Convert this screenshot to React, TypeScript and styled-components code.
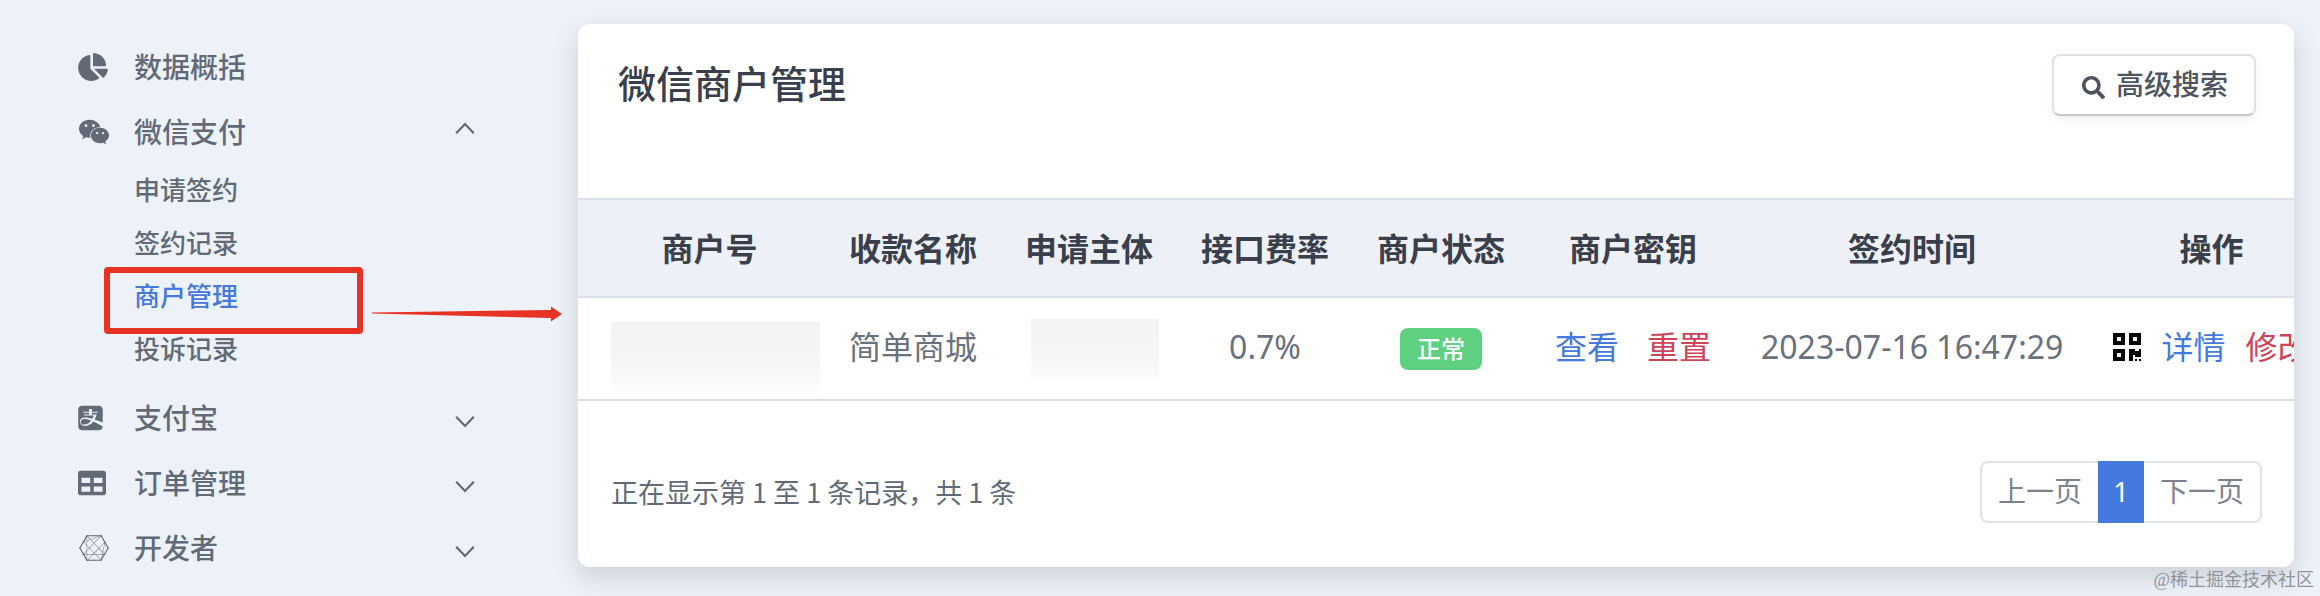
import React from 'react';
import styled, { createGlobalStyle, css } from 'styled-components';
import {
  FaAlipay,
  FaChartPie,
  FaConnectdevelop,
  FaQrcode,
  FaSearch,
  FaTable,
  FaWeixin,
} from 'react-icons/fa';

const color = {
  page: '#edf1f8',
  head: '#edf1f7',
  line: '#dadfea',
  ink: '#39404c',
  text: '#626a77',
  muted: '#7c838e',
  blue: '#4579dd',
  red: '#cf4359',
  green: '#5fcf80',
  mark: '#e63323',
};

const GlobalStyle = createGlobalStyle`
  *, *::before, *::after { box-sizing: border-box; }
  body {
    margin: 0;
    background: ${color.page};
    color: ${color.text};
    font-family: "Noto Sans", "Noto Sans CJK SC", sans-serif;
    font-size: 28px;
    line-height: 40px;
  }
  a { color: inherit; text-decoration: none; }
  button { font: inherit; cursor: pointer; }
`;

const Page = styled.div`
  position: relative;
  display: flex;
  min-height: 100vh;
  overflow: hidden;
`;

const Sidebar = styled.nav`
  flex: 0 0 578px;
  padding: 34px 103px 0 78px;
`;

const MenuList = styled.ul`
  list-style: none;
  margin: 0;
  padding: 0;
`;

const menuRow = css`
  display: flex;
  align-items: center;
  width: 100%;
  height: 65px;
  padding: 0;
  border: 0;
  background: none;
  color: ${color.text};
  text-align: left;
  font-weight: 500;
`;

const MenuLink = styled.a`
  ${menuRow}
`;

const MenuButton = styled.button`
  ${menuRow}
`;

const MenuIcon = styled.span<{ $width: number }>`
  display: flex;
  flex: 0 0 56px;

  svg {
    width: ${(p) => p.$width}px;
    height: 28px;
  }
`;

const MenuLabel = styled.span`
  flex: 1;
`;

const Chevron = styled.svg<{ $open?: boolean }>`
  width: 20px;
  height: 20px;
  fill: none;
  stroke: currentColor;
  stroke-width: 2.2;
  transform: ${(p) => (p.$open ? 'rotate(180deg)' : 'none')};
`;

const SubMenu = styled.ul`
  list-style: none;
  margin: 0 0 9px;
  padding: 0 0 0 56px;
`;

const SubItem = styled.li`
  position: relative;
`;

const SubLink = styled.a<{ $active?: boolean }>`
  display: flex;
  align-items: center;
  height: 53px;
  padding-bottom: 2px;
  font-size: 26px;
  font-weight: 500;
  color: ${(p) => (p.$active ? color.blue : color.text)};
`;

const Callout = styled.span`
  position: absolute;
  top: -3px;
  left: -30px;
  width: 259px;
  height: 67px;
  border: 6px solid ${color.mark};
  border-radius: 4px;
  pointer-events: none;
`;

const CalloutArrow = styled.svg`
  position: absolute;
  top: 36px;
  left: 238px;
  width: 190px;
  height: 16px;
  fill: ${color.mark};
  pointer-events: none;
`;

const Main = styled.main`
  flex: 1;
  min-width: 0;
  padding: 24px 26px 29px 0;
`;

const Card = styled.section`
  overflow: hidden;
  border-radius: 12px;
  background: #fff;
  box-shadow: 0 10px 24px rgba(40, 45, 60, 0.17);
`;

const CardHeader = styled.header`
  display: flex;
  align-items: flex-start;
  justify-content: space-between;
  height: 174px;
  padding: 30px 38px 0 40px;
`;

const Title = styled.h1`
  margin: 0;
  font-size: 38px;
  line-height: 58px;
  font-weight: 500;
  color: ${color.ink};
`;

const SearchButton = styled.button`
  display: flex;
  align-items: center;
  gap: 11px;
  height: 62px;
  padding: 0 26px 2px 28px;
  border: 2px solid #dfe1e4;
  border-bottom-color: #c6c8cc;
  border-radius: 8px;
  background: #fff;
  box-shadow: 0 4px 8px rgba(0, 0, 0, 0.06);
  color: #4d545f;
  font-weight: 500;

  svg {
    width: 23px;
    height: 23px;
    margin-top: 6px;
  }
`;

const TableWrap = styled.div`
  overflow: hidden;
`;

const Table = styled.table`
  width: 100%;
  min-width: 1758px;
  table-layout: fixed;
  border-collapse: separate;
  border-spacing: 0;
  font-size: 32px;
  text-align: center;
  white-space: nowrap;
`;

const Th = styled.th`
  height: 100px;
  padding: 2px 24px 0;
  border: solid ${color.line};
  border-width: 2px 0;
  background: ${color.head};
  color: ${color.ink};
  font-weight: 600;

  &:first-child {
    padding-left: 40px;
  }
`;

const Td = styled.td`
  height: 103px;
  padding: 0 24px 4px;
  border-bottom: 2px solid #dcdee2;
  color: #69717e;
`;

const MaskCell = styled(Td)<{ $pad: string }>`
  padding: ${(p) => p.$pad};
  vertical-align: top;
`;

const Mask = styled.div<{ $height: number }>`
  height: ${(p) => p.$height}px;
  background: linear-gradient(#f2f3f5, #f5f6f7 60%, #fdfdfd);
`;

const Actions = styled.div<{ $gap: number }>`
  display: flex;
  align-items: center;
  justify-content: center;
  gap: ${(p) => p.$gap}px;
`;

const ActionLink = styled.a<{ $danger?: boolean }>`
  && {
    color: ${(p) => (p.$danger ? color.red : color.blue)};
  }
`;

const QrButton = styled.button`
  display: flex;
  padding: 0;
  border: 0;
  background: none;
  color: #000;

  svg {
    width: 28px;
    height: 32px;
  }
`;

const Badge = styled.span`
  display: inline-block;
  padding: 0 17px;
  border-radius: 8px;
  background: ${color.green};
  color: #fff;
  font-size: 24px;
  line-height: 42px;
  font-weight: 500;
  vertical-align: -3px;
`;

const CardFooter = styled.footer`
  display: flex;
  align-items: center;
  justify-content: space-between;
  height: 166px;
  padding: 16px 32px 0 33px;
`;

const Summary = styled.p`
  margin: 0;
  font-family: "Noto Sans CJK SC", sans-serif;
  font-size: 27px;
`;

const Pager = styled.div`
  display: flex;
  height: 62px;
  border: 2px solid #dfe3e8;
  border-radius: 8px;
`;

const PageButton = styled.button<{ $current?: boolean }>`
  padding: 0 16px 2px;
  border: 0;
  background: none;
  color: ${color.muted};

  ${(p) =>
    p.$current &&
    css`
      margin: -2px 0;
      padding: 0 15px 2px;
      background: ${color.blue};
      color: #fff;
    `}
`;

const Watermark = styled.span`
  position: absolute;
  right: 6px;
  bottom: 4px;
  font-family: "Liberation Serif", "Noto Sans CJK SC", serif;
  font-size: 18px;
  line-height: 24px;
  color: #8f949e;
`;

const MenuChevron = ({ open }: { open?: boolean }) => (
  <Chevron $open={open} viewBox="0 0 20 20" aria-hidden="true">
    <path d="M1.2 8.8 10 18 18.8 8.8" />
  </Chevron>
);

const subItems = ['申请签约', '签约记录', '商户管理', '投诉记录'];

const groups = [
  { label: '支付宝', icon: <FaAlipay />, iconWidth: 25 },
  { label: '订单管理', icon: <FaTable />, iconWidth: 28 },
  { label: '开发者', icon: <FaConnectdevelop />, iconWidth: 32 },
];

const columns = [
  { label: '商户号', width: 247 },
  { label: '收款名称', width: 176 },
  { label: '申请主体', width: 176 },
  { label: '接口费率', width: 176 },
  { label: '商户状态', width: 176 },
  { label: '商户密钥', width: 208 },
  { label: '签约时间', width: 350 },
  { label: '操作', width: 249 },
];

const Menu = () => (
  <Sidebar>
    <MenuList>
      <li>
        <MenuLink href="#overview">
          <MenuIcon $width={30}><FaChartPie /></MenuIcon>
          <MenuLabel>数据概括</MenuLabel>
        </MenuLink>
      </li>
      <li>
        <MenuButton type="button" aria-expanded="true">
          <MenuIcon $width={32}><FaWeixin /></MenuIcon>
          <MenuLabel>微信支付</MenuLabel>
          <MenuChevron open />
        </MenuButton>
        <SubMenu>
          {subItems.map((label) => {
            const active = label === '商户管理';
            return (
              <SubItem key={label}>
                <SubLink href="#wechat" $active={active}>{label}</SubLink>
                {active && (
                  <>
                    <Callout />
                    <CalloutArrow viewBox="0 0 190 16" aria-hidden="true">
                      <path d="M0 6.6 179 4V0.5L190 8 179 15.5V12L0 7.6Z" />
                    </CalloutArrow>
                  </>
                )}
              </SubItem>
            );
          })}
        </SubMenu>
      </li>
      {groups.map((group) => (
        <li key={group.label}>
          <MenuButton type="button" aria-expanded="false">
            <MenuIcon $width={group.iconWidth}>{group.icon}</MenuIcon>
            <MenuLabel>{group.label}</MenuLabel>
            <MenuChevron />
          </MenuButton>
        </li>
      ))}
    </MenuList>
  </Sidebar>
);

const MerchantTable = () => (
  <TableWrap>
    <Table>
      <colgroup>
        {columns.map((c) => (
          <col key={c.label} width={c.width} />
        ))}
      </colgroup>
      <thead>
        <tr>
          {columns.map((c) => (
            <Th key={c.label} scope="col">{c.label}</Th>
          ))}
        </tr>
      </thead>
      <tbody>
        <tr>
          <MaskCell $pad="24px 5px 0 33px"><Mask $height={72} /></MaskCell>
          <Td>简单商城</Td>
          <MaskCell $pad="21px 18px 0 30px"><Mask $height={63} /></MaskCell>
          <Td>0.7%</Td>
          <Td><Badge>正常</Badge></Td>
          <Td>
            <Actions $gap={28}>
              <ActionLink href="#view">查看</ActionLink>
              <ActionLink href="#reset" $danger>重置</ActionLink>
            </Actions>
          </Td>
          <Td>2023-07-16 16:47:29</Td>
          <Td>
            <Actions $gap={20}>
              <QrButton type="button" aria-label="二维码"><FaQrcode /></QrButton>
              <ActionLink href="#detail">详情</ActionLink>
              <ActionLink href="#edit" $danger>修改</ActionLink>
            </Actions>
          </Td>
        </tr>
      </tbody>
    </Table>
  </TableWrap>
);

export default function App() {
  return (
    <>
      <GlobalStyle />
      <Page>
        <Menu />
        <Main>
          <Card>
            <CardHeader>
              <Title>微信商户管理</Title>
              <SearchButton type="button">
                <FaSearch />
                高级搜索
              </SearchButton>
            </CardHeader>
            <MerchantTable />
            <CardFooter>
              <Summary>正在显示第 1 至 1 条记录，共 1 条</Summary>
              <Pager>
                <PageButton type="button">上一页</PageButton>
                <PageButton type="button" $current aria-current="page">1</PageButton>
                <PageButton type="button">下一页</PageButton>
              </Pager>
            </CardFooter>
          </Card>
        </Main>
        <Watermark>@稀土掘金技术社区</Watermark>
      </Page>
    </>
  );
}
